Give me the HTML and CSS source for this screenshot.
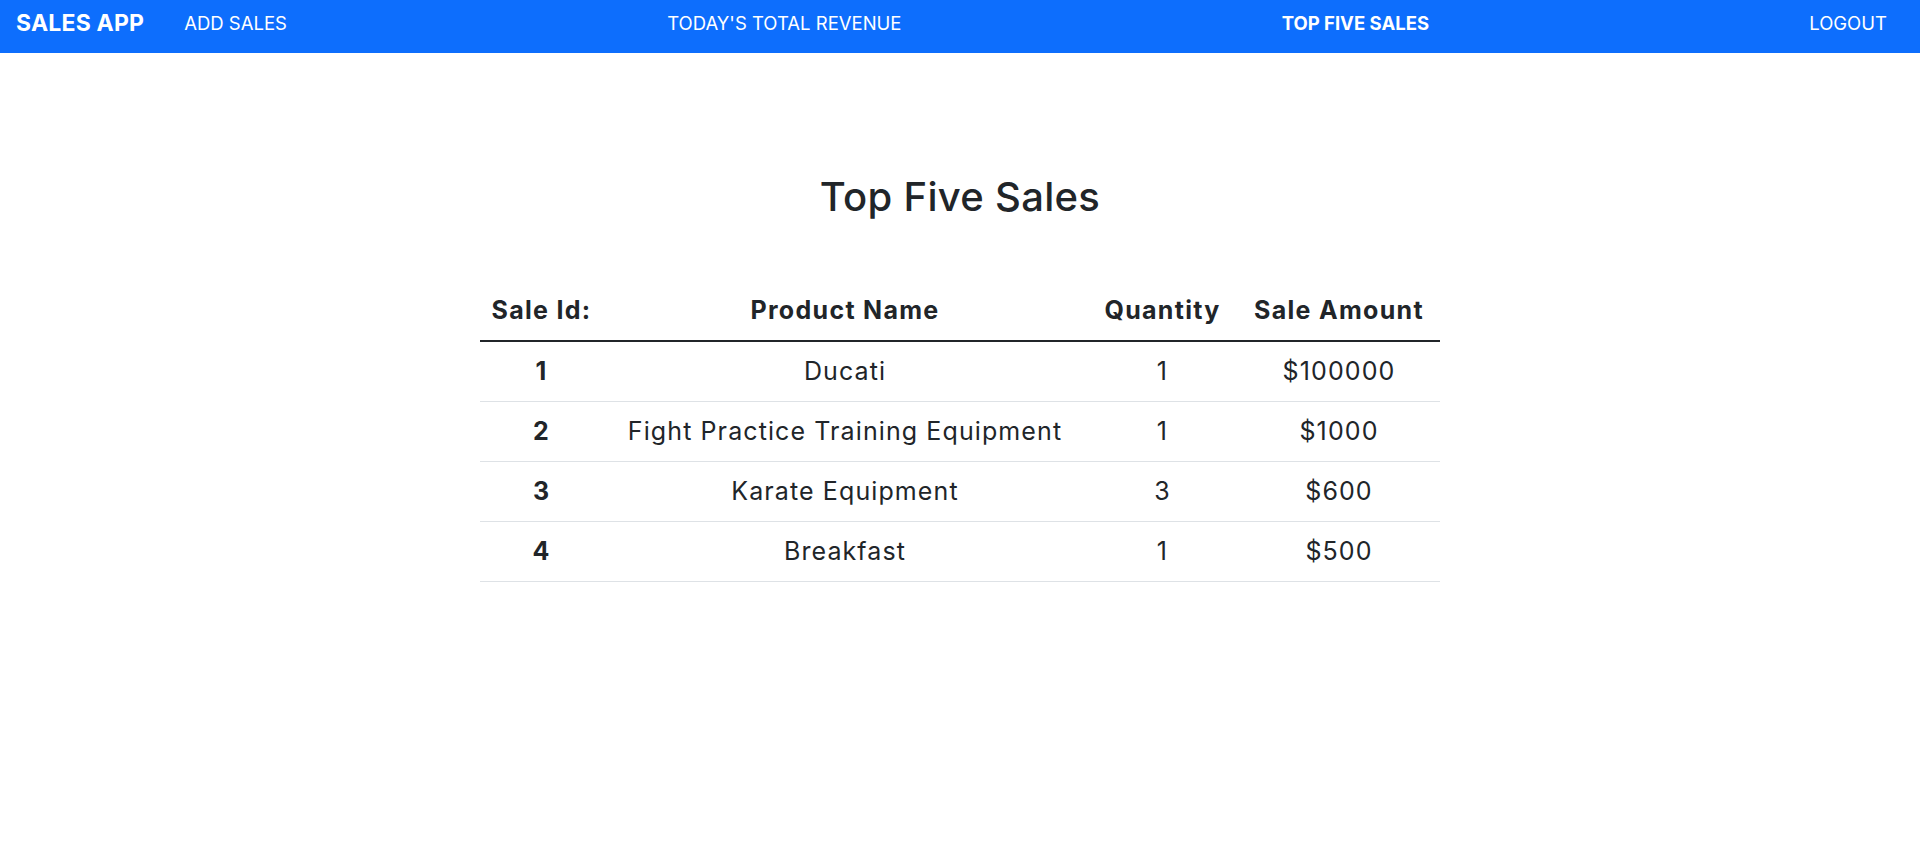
FILE: index.html
```html
<!DOCTYPE html>
<html lang="en">
<head>
<meta charset="utf-8">
<title>Sales App - Top Five Sales</title>
<link rel="stylesheet" href="styles.css">
</head>
<body>
<nav class="navbar">
  <a class="brand" href="#">SALES APP</a>
  <ul class="nav-links">
    <li><a class="nav-link" href="#">ADD SALES</a></li>
    <li><a class="nav-link" href="#">TODAY'S TOTAL REVENUE</a></li>
    <li><a class="nav-link active" href="#">TOP FIVE SALES</a></li>
    <li><a class="nav-link" href="#">LOGOUT</a></li>
  </ul>
</nav>
<main class="page">
  <h1 class="title">Top Five Sales</h1>
  <table class="sales-table">
    <colgroup>
      <col class="col-id">
      <col class="col-name">
      <col class="col-qty">
      <col class="col-amount">
    </colgroup>
    <thead>
      <tr>
        <th>Sale Id:</th>
        <th>Product Name</th>
        <th>Quantity</th>
        <th>Sale Amount</th>
      </tr>
    </thead>
    <tbody>
      <tr><td class="id">1</td><td>Ducati</td><td>1</td><td>$100000</td></tr>
      <tr><td class="id">2</td><td>Fight Practice Training Equipment</td><td>1</td><td>$1000</td></tr>
      <tr><td class="id">3</td><td>Karate Equipment</td><td>3</td><td>$600</td></tr>
      <tr><td class="id">4</td><td>Breakfast</td><td>1</td><td>$500</td></tr>
    </tbody>
  </table>
</main>
</body>
</html>
```
FILE: styles.css
```css
* { box-sizing: border-box; }

html, body {
  margin: 0;
  padding: 0;
  background: #ffffff;
}

body {
  font-family: Inter, "Open Sans", sans-serif;
  color: #212529;
}

.navbar {
  display: flex;
  align-items: flex-start;
  height: 53px;
  padding: 0 33px 0 16px;
  background: #0d6efd;
}

.brand {
  margin: 6px 40px 0 0;
  font-size: 23px;
  line-height: 34.5px;
  font-weight: 700;
  letter-spacing: 0.2px;
  color: #ffffff;
  text-decoration: none;
}

.nav-links {
  flex: 1;
  display: flex;
  justify-content: space-between;
  margin: 9.5px 0 0 0;
  padding: 0;
  list-style: none;
}

.nav-link {
  display: block;
  font-size: 18.5px;
  line-height: 27.75px;
  font-weight: 400;
  color: #ffffff;
  text-decoration: none;
}

.nav-link.active {
  font-weight: 700;
}

.page {
  padding-top: 120px;
}

.title {
  margin: 0 0 60px 0;
  text-align: center;
  font-size: 40px;
  line-height: 48px;
  font-weight: 500;
  letter-spacing: 0.3px;
}

.sales-table {
  width: 960px;
  margin: 0 auto;
  border-collapse: collapse;
  table-layout: fixed;
}

.col-id { width: 123px; }
.col-name { width: 484px; }
.col-qty { width: 151px; }
.col-amount { width: 202px; }

.sales-table th,
.sales-table td {
  padding: 11px 4px;
  text-align: center;
  font-size: 25px;
  line-height: 37px;
  white-space: nowrap;
}

.sales-table th {
  font-weight: 700;
  letter-spacing: 1.3px;
  border-bottom: 2px solid #212529;
}

.sales-table td {
  font-weight: 400;
  letter-spacing: 1.1px;
  border-bottom: 1px solid #dee2e6;
}

.sales-table td.id {
  font-weight: 700;
}
```
